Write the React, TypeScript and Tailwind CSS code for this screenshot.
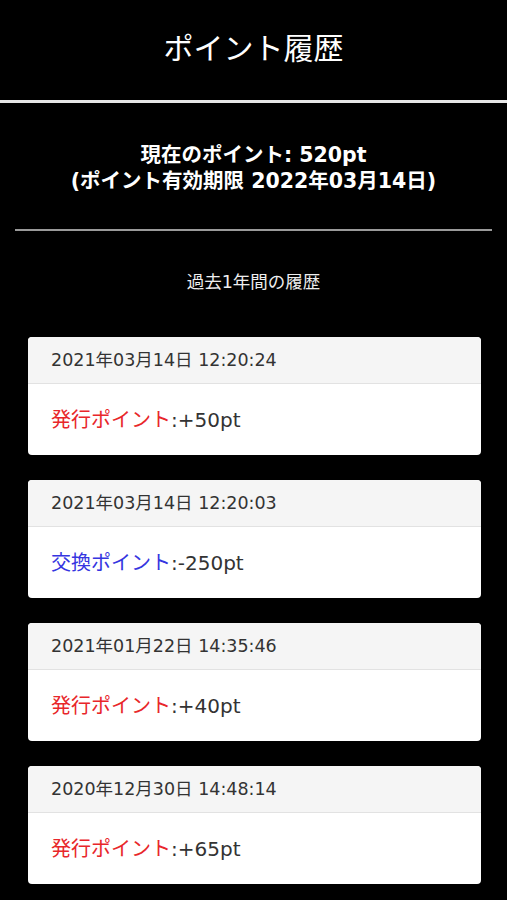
const history = [
  { date: '2021年03月14日 12:20:24', type: 'issue', amount: '+50pt' },
  { date: '2021年03月14日 12:20:03', type: 'exchange', amount: '-250pt' },
  { date: '2021年01月22日 14:35:46', type: 'issue', amount: '+40pt' },
  { date: '2020年12月30日 14:48:14', type: 'issue', amount: '+65pt' },
];

const sans = { fontFamily: '"DejaVu Sans", "Noto Sans CJK JP", sans-serif' };

function HistoryCard({ date, type, amount }: { date: string; type: string; amount: string }) {
  const isIssue = type === 'issue';
  return (
    <div className="overflow-hidden rounded-[4px] bg-white">
      <div className="flex h-[47px] items-center border-b border-[#e2e2e2] bg-[#f5f5f5] px-[23px] text-[17.5px] text-[#333]">
        {date}
      </div>
      <div className="flex h-[71px] items-center px-[23px] text-[20px] text-[#333]">
        <span className={isIssue ? 'text-[#e8262a]' : 'text-[#3535e0]'}>
          {isIssue ? '発行ポイント' : '交換ポイント'}
        </span>
        <span>:{amount}</span>
      </div>
    </div>
  );
}

export default function App() {
  return (
    <div className="min-h-screen bg-black text-white" style={sans}>
      {/* Title */}
      <header className="flex h-[100px] items-center justify-center pb-[3px]">
        <h1
          className="text-[30px] font-normal leading-none"
          style={{ fontFamily: '"Liberation Serif", "Noto Sans CJK JP", serif' }}
        >
          ポイント履歴
        </h1>
      </header>
      <div className="h-[3px] bg-[#e6e6e6]" />

      {/* Current points */}
      <section className="pt-[39px] text-center text-[20.5px] font-bold leading-[26px]">
        <p>現在のポイント: 520pt</p>
        <p>(ポイント有効期限 2022年03月14日)</p>
      </section>
      <div className="mx-[15px] mt-[35px] h-[2px] bg-[#9a9a9a]" />

      <p className="mt-[40px] text-center text-[17.5px] leading-[22px] text-[#eee]">過去1年間の履歴</p>

      {/* History list */}
      <div className="ml-[28px] mr-[26px] mt-[44px] flex flex-col gap-[25px] pb-[20px]">
        {history.map((h) => (
          <HistoryCard key={h.date} {...h} />
        ))}
      </div>
    </div>
  );
}
